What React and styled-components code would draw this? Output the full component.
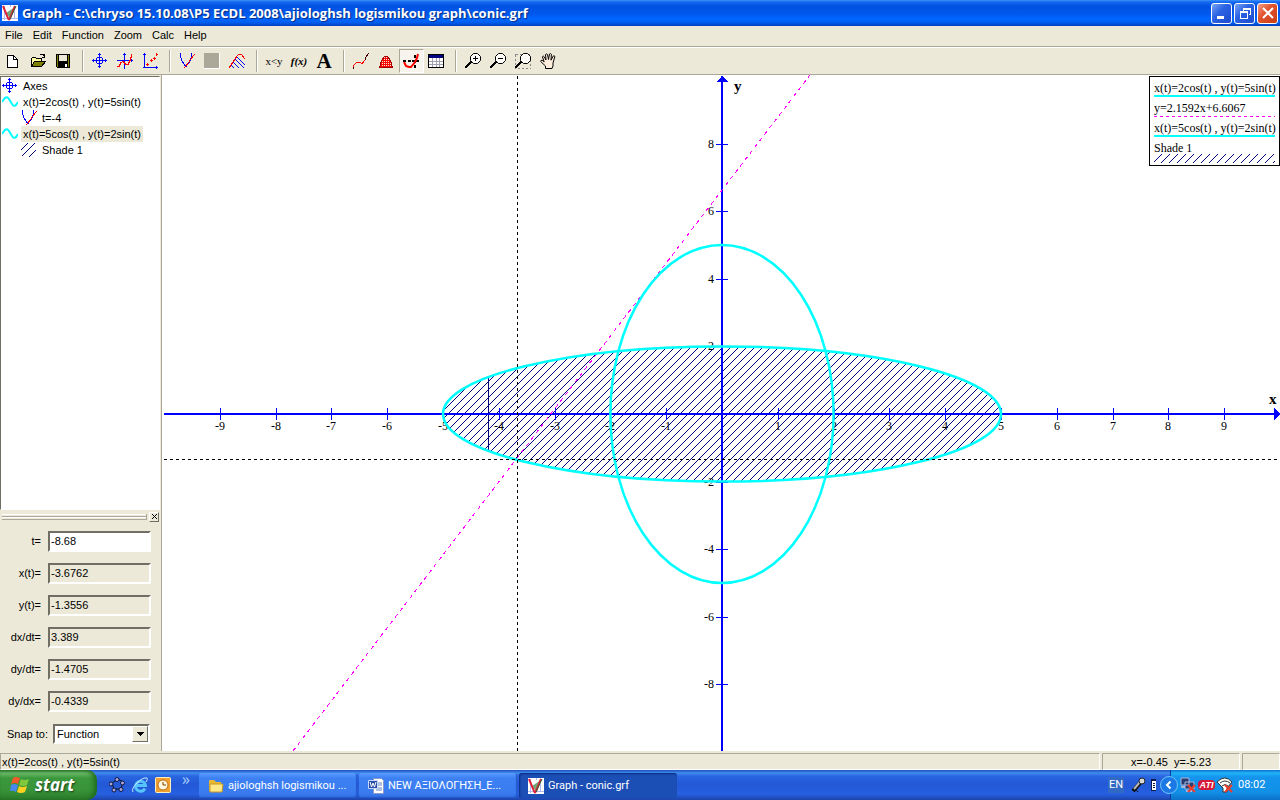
import React from "react";
import styled, { createGlobalStyle, css } from "styled-components";

const face = "#ece9d8";
const shadow = "#aca899";
const sans = '"Liberation Sans", Arial, sans-serif';
const humanist = '"Open Sans", "Noto Sans", sans-serif';
const serif = '"Liberation Serif", "Times New Roman", serif';

const GlobalStyle = createGlobalStyle`
  *, *::before, *::after { box-sizing: border-box; }
  body { margin: 0; background: ${face}; color: #000; font: 11px/16px ${sans}; }
  button, input, select { font: inherit; color: inherit; margin: 0; padding: 0; }
  svg { display: block; flex: none; }
`;

const Window = styled.div`
  display: flex;
  flex-direction: column;
  min-height: 100vh;
`;

/* ---------- title bar ---------- */
const TitleBar = styled.header`
  display: flex;
  align-items: center;
  gap: 4px;
  height: 26px;
  padding: 0 2px;
  background: linear-gradient(#3c92fa 0, #1468f0 2px, #0052e0 6px, #0058ee 14px, #0066ff 19px, #0062f4 22px, #0040c0 26px);
`;
const Title = styled.h1`
  flex: 1;
  margin: 0;
  font: bold 13px/20px ${humanist};
  color: #fff;
  text-shadow: 1px 1px 1px #0a2a80;
  white-space: nowrap;
  overflow: hidden;
`;
const CaptionButton = styled.button`
  display: flex;
  align-items: center;
  justify-content: center;
  width: 21px;
  height: 21px;
  margin-left: 2px;
  border: 1px solid #fff;
  border-radius: 3px;
  background: ${(p) =>
    p.$close
      ? "linear-gradient(135deg, #f0a088, #e2542e 40%, #c83c14)"
      : "linear-gradient(135deg, #7ca4f4, #2c64e4 40%, #1c4ccc)"};
`;
const CaptionButtons = styled.div`
  display: flex;
`;

/* ---------- menu and toolbar ---------- */
const MenuBar = styled.nav`
  display: flex;
  height: 21px;
  padding-top: 1px;
  border-bottom: 1px solid ${shadow};
`;
const MenuItem = styled.button`
  height: 16px;
  padding: 0 5px;
  border: 0;
  background: none;
`;
const ToolBar = styled.div`
  display: flex;
  align-items: center;
  height: 28px;
  padding-left: 1px;
  border-top: 1px solid #fff;
  border-bottom: 1px solid ${shadow};
`;
const ToolButton = styled.button`
  display: flex;
  align-items: center;
  justify-content: center;
  width: 25px;
  height: 24px;
  padding: 0 4px 0 3px;
  border: 1px solid transparent;
  background: none;
  ${(p) =>
    p.$pressed &&
    css`
      border-color: ${shadow} #fff #fff ${shadow};
      background: #f6f4ec;
    `}
`;
const ToolSeparator = styled.span`
  width: 2px;
  height: 22px;
  margin: 0 4px 0 6px;
  border-left: 1px solid ${shadow};
  border-right: 1px solid #fff;
`;

/* ---------- sidebar ---------- */
const Main = styled.main`
  display: flex;
  flex: 1;
  min-height: 0;
`;
const Sidebar = styled.aside`
  display: flex;
  flex-direction: column;
  flex: none;
  width: 163px;
  padding: 1px 2px 0 0;
  border-right: 1px solid #fff;
  box-shadow: inset -1px 0 ${shadow};
`;
const FunctionList = styled.ul`
  flex: 1;
  margin: 0;
  padding: 1px 0;
  list-style: none;
  background: #fff;
  border: 1px solid #fff;
  border-top-color: #716f64;
  border-left-color: #716f64;
`;
const FunctionItem = styled.li`
  display: flex;
  align-items: center;
  gap: 3px;
  height: 16px;
  padding-left: ${(p) => (p.$child ? 20 : 1)}px;
`;
const ItemLabel = styled.span`
  padding: 0 2px;
  background: ${(p) => (p.$selected ? face : "none")};
  white-space: nowrap;
`;
const PanelGrip = styled.div`
  display: flex;
  align-items: center;
  gap: 2px;
  height: 15px;
  padding: 0 1px 2px 2px;
`;
const GripLines = styled.div`
  flex: 1;
  height: 6px;
  border: solid ${shadow};
  border-width: 0 1px 1px 0;
  background: linear-gradient(#fff 0 1px, ${face} 1px 2px, ${shadow} 2px 3px, #fff 3px 4px, ${face} 4px);
`;
const CloseButton = styled.button`
  display: flex;
  align-items: center;
  justify-content: center;
  width: 10px;
  height: 10px;
  border: 1px solid;
  border-color: #fff #716f64 #716f64 #fff;
  background: ${face};
`;
const EvaluateForm = styled.form`
  display: flex;
  flex-direction: column;
`;
const FormRow = styled.div`
  display: flex;
  align-items: center;
  height: ${(p) => (p.$last ? 34 : 32)}px;
  gap: ${(p) => (p.$last ? 5 : 7)}px;
  padding-right: ${(p) => (p.$last ? 10 : 9)}px;
`;
const FieldLabel = styled.label`
  width: ${(p) => (p.$wide ? 48 : 41)}px;
  flex: none;
  text-align: right;
  white-space: nowrap;
`;
const sunken = css`
  border: 2px solid;
  border-color: #716f64 #fff #fff #716f64;
  border-radius: 0;
  outline: 0;
`;
const Field = styled.input`
  ${sunken}
  flex: 1;
  min-width: 0;
  height: 21px;
  padding: 0 1px;
  background: ${(p) => (p.readOnly ? face : "#fff")};
`;
const SelectBox = styled.div`
  position: relative;
  flex: 1;
`;
const Select = styled.select`
  ${sunken}
  display: block;
  width: 100%;
  height: 20px;
  padding: 0 2px;
  appearance: none;
  background: #fff;
`;
const SelectArrow = styled.span`
  position: absolute;
  top: 2px;
  right: 2px;
  display: flex;
  align-items: center;
  justify-content: center;
  width: 16px;
  height: 16px;
  border: 1px solid;
  border-color: #fff #716f64 #716f64 #fff;
  background: ${face};
  pointer-events: none;
`;

/* ---------- plot ---------- */
const PlotArea = styled.section`
  position: relative;
  flex: 1;
  min-width: 0;
  background: #fff;
`;
const PlotSvg = styled.svg`
  width: 100%;
  height: 100%;
`;
const Legend = styled.div`
  position: absolute;
  top: 1px;
  right: 0;
  width: 131px;
  height: 90px;
  padding: 5px 4px 0 4px;
  border: 1px solid #000;
  background: #fff;
  font: 12px/13px ${serif};
  white-space: nowrap;
`;
const LegendRow = styled.div`
  height: 20px;
`;
const LegendLine = styled.div`
  height: ${(p) => (p.$dashed ? 1 : 2)}px;
  margin-top: ${(p) => (p.$dashed ? 1 : 0)}px;
  background: ${(p) => (p.$dashed ? "repeating-linear-gradient(90deg, #f0f 0 3px, #fff 3px 6px)" : "#0ff")};
`;
const LegendHatch = styled.svg`
  width: 100%;
  height: 9px;
  margin-top: -1px;
`;

/* ---------- status bar ---------- */
const StatusBar = styled.footer`
  display: flex;
  gap: 2px;
  height: 19px;
  padding-top: 2px;
`;
const StatusCell = styled.div`
  flex: ${(p) => (p.$width ? "none" : 1)};
  width: ${(p) => (p.$width ? `${p.$width}px` : "auto")};
  padding: 0 1px;
  border: 1px solid;
  border-color: ${shadow} #fff #fff ${shadow};
  text-align: ${(p) => (p.$center ? "center" : "left")};
  white-space: pre;
`;

/* ---------- taskbar ---------- */
const TaskBar = styled.nav`
  display: flex;
  align-items: stretch;
  height: 30px;
  color: #fff;
  font: 11px/16px Roboto, "Noto Sans", sans-serif;
  background: linear-gradient(#1f50b8 0, #3f8cf0 3px, #2a66e0 6px, #2358d6 14px, #2660e0 24px, #1c44ac 30px);
`;
const StartButton = styled.button`
  display: flex;
  align-items: center;
  gap: 5px;
  width: 97px;
  padding-left: 10px;
  border: 0;
  border-radius: 0 10px 10px 0;
  color: #fff;
  font: italic bold 17px/24px ${humanist};
  text-shadow: 1px 1px 2px #1c401c;
  background: linear-gradient(#357c35 0, #6cbc6c 3px, #3c983c 8px, #389438 20px, #2c7c2c 30px);
  box-shadow: inset -3px 0 5px #1f6a1f;
`;
const QuickLaunch = styled.div`
  display: flex;
  align-items: center;
  gap: 7px;
  width: 102px;
  padding-left: 12px;
`;
const IconButton = styled.button`
  display: flex;
  border: 0;
  background: none;
`;
const Overflow = styled.button`
  align-self: flex-start;
  margin-left: 4px;
  border: 0;
  background: none;
  color: #a8d0ff;
  font: 16px/18px ${humanist};
`;
const TaskButtons = styled.div`
  display: flex;
  align-items: center;
  flex: 1;
  gap: 2px;
  min-width: 0;
  padding-top: 1px;
`;
const TaskButton = styled.button`
  display: flex;
  align-items: center;
  gap: 4px;
  flex: 0 1 158px;
  min-width: 0;
  height: 25px;
  padding: 1px 0 0 9px;
  border: 0;
  border-radius: 3px;
  color: #fff;
  white-space: nowrap;
  overflow: hidden;
  background: ${(p) => (p.$active ? "#1c4fb6" : "linear-gradient(#5c9cfc, #3c80f4 5px, #3a7cf0 20px, #2f6ce0)")};
  box-shadow: ${(p) => (p.$active ? "inset 1px 1px 2px #0c2c80" : "inset -1px -1px 1px #2458c8")};
`;
const Language = styled.button`
  align-self: center;
  width: 16px;
  height: 16px;
  border: 0;
  margin-right: 7px;
  background: #316ac5;
  color: #fff;
`;
const LanguageTools = styled.div`
  display: flex;
  align-items: center;
  gap: 4px;
  width: 39px;
`;
const Tray = styled.div`
  display: flex;
  align-items: center;
  gap: 2px;
  width: 110px;
  border-left: 1px solid #0c3c9c;
  background: linear-gradient(#1070c8 0, #20b4f8 3px, #1494ec 7px, #1290e8 22px, #0c70c8 30px);
`;
const TrayExpand = styled.button`
  display: flex;
  margin-left: -11px;
  border: 0;
  background: none;
`;
const Clock = styled.time`
  margin-left: 3px;
`;

/* ---------- icons ---------- */
const Icon = ({ size = 16, children, smooth }) => (
  <svg
    width={size}
    height={size}
    viewBox={`0 0 ${size} ${size}`}
    fill="none"
    shapeRendering={smooth ? "auto" : "crispEdges"}
    aria-hidden="true"
  >
    {children}
  </svg>
);

const GraphLogo = () => (
  <Icon smooth>
    <path d="M0 0h16v16H0z" fill="#fff" />
    <path d="M2.500 1v14M0 13.500h16M8.500 0v2M12.500 6v8" stroke="#b0b8f0" />
    <path d="M13 2L4 8l4 5z" fill="#70a878" />
    <path d="M1 1l5 12q1 3 2 0l5-12" stroke="#e02038" strokeWidth="2" />
    <path d="M8 14l6-13" stroke="#246838" />
  </Icon>
);
const NewIcon = () => (
  <Icon>
    <path d="M2.500 2.500h6l4 4v8h-10z" fill="#fff" stroke="#000" />
    <path d="M8.500 2.500v4h4" stroke="#000" />
  </Icon>
);
const OpenIcon = () => (
  <Icon>
    <path d="M1.500 13.500v-8l1-1h3l1 1h5v3" fill="#ffffa0" stroke="#000" />
    <path d="M1.500 13.500l3-5h11l-4 5z" fill="#808000" stroke="#000" />
    <path d="M9.500 2.500l1-1h3l1 2M14.500 1v4M12 4.500h3" stroke="#000" />
  </Icon>
);
const SaveIcon = () => (
  <Icon>
    <path d="M1.500 1.500h13v13h-12l-1-1z" fill="#808000" stroke="#000" />
    <path d="M4 2h8v6H4z" fill="#ece9d8" />
    <path d="M3 9h10v5H3z" fill="#000" />
    <path d="M10 11h2v3h-2z" fill="#fff" />
    <path d="M3.500 2v6.500h9V2" stroke="#000" />
  </Icon>
);
const AxesIcon = () => (
  <Icon>
    <path
      d="M7 0h1v15H7zM0 7h15v1H0zM6 1h3v1H6zM5 4h5v1H5zM5 10h5v1H5zM6 13h3v1H6zM1 6h1v3H1zM4 5h1v5H4zM10 5h1v5h-1zM13 6h1v3h-1z"
      fill="#00f"
    />
  </Icon>
);
const FunctionIcon = () => (
  <Icon>
    <path d="M7.500 0v16M0 7.500h16M6 1.500h3M14.500 6v3" stroke="#00f" />
    <path d="M0 13.500h2l2-4 2-1 3 3h2l2-4 2-6" stroke="#f00" />
  </Icon>
);
const PointsIcon = () => (
  <Icon>
    <path d="M2.500 0v14M1 14.500h15M1 1.500h3M14.500 13v3" stroke="#00f" />
    <path d="M4 11.500h3M5.500 10v3M8 7.500h3M9.500 6v3M11 5.500h3M12.500 4v3M14 1.500h2M14.500 0v3" stroke="#f00" />
  </Icon>
);
const TangentIcon = () => (
  <Icon>
    <path d="M1.500 0v4l2 5 3 4h1l3-4 2-5V0" stroke="#00f" />
    <path d="M15.500 1l-10 14" stroke="#f00" />
  </Icon>
);
const StopIcon = () => (
  <Icon>
    <path d="M0 0h16v16H0z" fill={shadow} />
    <path d="M15.500 0v15.500H0" stroke="#fff" />
  </Icon>
);
const ShadeIcon = () => (
  <Icon>
    <path d="M2 12l3 3M4 9l6 6M6 6l9 9M8 4l8 8" stroke="#00f" />
    <path d="M0 15L8 3l2-2h2l4 5" stroke="#f00" />
  </Icon>
);
const LineIcon = () => (
  <Icon>
    <path d="M0 15l1-3 3-3h3l2 2 3-4" stroke="#f00" />
    <path d="M12 7l1-3 3-4M0 16v-2" stroke="#400" />
  </Icon>
);
const AreaIcon = () => (
  <Icon>
    <defs>
      <pattern id="checker" width="2" height="2" patternUnits="userSpaceOnUse">
        <path d="M0 0h2v2H0z" fill="#f00" />
        <path d="M0 0h1v1H0z" fill="#ece9d8" />
      </pattern>
    </defs>
    <path d="M1.500 14.500l2-7 3-4h3l3 4 2 7z" fill="url(#checker)" stroke="#a00000" />
  </Icon>
);
const EvaluateIcon = () => (
  <Icon>
    <path d="M0 7h3v2H0zM5 7h3v2H5zM9 7h3v2H9zM13 7h3v2h-3zM11 2h2v3h-2zM11 7h2v3h-2zM11 12h2v3h-2z" fill="#000" />
    <path d="M1 9l2 4 3 1h2l4-5 2-4 1-4" stroke="#f00" strokeWidth="2" shapeRendering="auto" />
  </Icon>
);
const TableIcon = () => (
  <Icon>
    <path d="M.5 1.500h15v13H.5z" fill="#fff" stroke="#000" />
    <path d="M1 2h14v3H1z" fill="#000080" />
    <path d="M1 8.500h14M1 11.500h14M4.500 5v9M8.500 5v9M11.500 5v9" stroke="#a0a0b0" />
  </Icon>
);
const Magnifier = ({ sign, boxed }) => (
  <Icon>
    {boxed && <path d="M.5 1.500h15v14H.5z" stroke="#888" strokeDasharray="2 2" />}
    <path d="M8.500 .5h4l3 3v4l-3 3h-4l-3-3v-4z" fill="#fdfcf8" stroke="#000" shapeRendering="auto" />
    <path d="M6 9l-6 6" stroke="#000" strokeWidth="2" />
    {sign && <path d="M8 5.500h5" stroke="#000" />}
    {sign === "+" && <path d="M10.500 3v5" stroke="#000" />}
  </Icon>
);
const HandIcon = () => (
  <Icon smooth>
    <path
      d="M5.500 15.500V13L.7 8.500q0-1.500 1.500-1.200l2 1.500-1.800-5q.8-1.500 1.800 0L6 7 5.500 1.500q1-1.200 2 0L8.500 6.500 9.500 1q1.200-1 1.900.3L11 7.200l2.300-4.300q1.400-.5 1.500.8L13 10v3l-1 2.500z"
      fill="#ffeedd"
      stroke="#000"
    />
  </Icon>
);
const WaveIcon = () => (
  <Icon smooth>
    <path d="M0 8l3-4q2-2 4 1l3 5q2 3 4 1l2-3" stroke="#0ff" strokeWidth="2" />
  </Icon>
);
const HatchIcon = () => (
  <Icon>
    <path d="M0 8l7-7M1 14L14 1M8 15l7-7" stroke="#000080" />
  </Icon>
);

const XpFlag = () => (
  <svg width="20" height="20" viewBox="0 0 20 20" aria-hidden="true">
    <path d="M3 3q3-2 7 0L8 9Q5 7 1 9z" fill="#f05a28" />
    <path d="M11 4q3 2 8 0l-2 6q-4 2-8 0z" fill="#80c83c" />
    <path d="M1 10q3-2 7 0l-2 7q-3-2-6-1z" fill="#4888f0" />
    <path d="M9 11q3 2 8 0l-2 6q-4 2-8 0z" fill="#ffd020" />
  </svg>
);
const CircleDotsIcon = () => (
  <Icon smooth>
    <path d="M3 6l6-4 5 3-2 7H5z" stroke="#111" strokeWidth="1" />
    {[[8, 2.5], [13.5, 6], [12, 12.5], [5, 13], [2, 7]].map(([x, y]) => (
      <circle key={x} cx={x} cy={y} r="2" fill="#a8a8e0" stroke="#101840" />
    ))}
  </Icon>
);
const IeIcon = () => (
  <Icon smooth>
    <path d="M13 11.500a5 5 0 1 1 .5-3H5" stroke="#58c4fc" strokeWidth="3" />
    <path d="M1 15Q-1 12 5 6t10-5q1 1-1 4" stroke="#c8ecff" strokeWidth="1" />
  </Icon>
);
const OutlookIcon = () => (
  <Icon smooth>
    <rect x=".5" y=".5" width="15" height="15" rx="1" fill="#f0a030" stroke="#fff0c0" />
    <circle cx="8" cy="8" r="5" fill="#fff8e0" stroke="#c06c10" />
    <path d="M8 5v3h3" stroke="#804000" />
  </Icon>
);
const FolderIcon = () => (
  <Icon smooth>
    <path d="M1 3q0-1 1-1h4l2 2h5v9H1z" fill="#e8b830" />
    <path d="M2 6h13l-1 8H2z" fill="#ffe888" stroke="#c89820" />
  </Icon>
);
const WordIcon = () => (
  <Icon smooth>
    <path d="M5.500.5h8l2 2v13h-10z" fill="#fff" stroke="#8898c8" />
    <path d="M10 5h4M10 7h4M8 10h6M8 12h6" stroke="#6080c0" />
    <path d="M.5 2.500h9v8h-9z" fill="#2850a8" stroke="#c8d8ff" />
    <path d="M2 4l1.500 5L5 5l1.500 4L8 4" stroke="#fff" />
  </Icon>
);
const MicIcon = () => (
  <Icon smooth>
    <path d="M2 14l7-8" stroke="#111" strokeWidth="4" />
    <path d="M3 12l6-7" stroke="#b8b8b8" strokeWidth="2" />
    <circle cx="11" cy="4" r="3" fill="#d8d8d8" stroke="#222" />
    <path d="M3 14q3-2 4 1" stroke="#111" />
  </Icon>
);
const KeyboardIcon = () => (
  <svg width="5" height="12" viewBox="0 0 5 12" shapeRendering="crispEdges" aria-hidden="true">
    <path d="M0 0h5v11H0z" fill="#fff" />
    <path d="M0 0h5v2H0zM2 4h2v1H2zM2 6h2v1H2zM2 8h2v1H2zM0 11h5v1H0zM0 0h1v11H0z" fill="#101850" />
  </svg>
);
const ExpandIcon = () => (
  <Icon size={18} smooth>
    <circle cx="9" cy="9" r="8.500" fill="#1c78e4" stroke="#6cc4fc" />
    <path d="M10.500 5.500L7 9l3.500 3.500" stroke="#fff" strokeWidth="2" />
  </Icon>
);
const NetworkIcon = () => (
  <Icon smooth>
    <path d="M1 1h8v7H1zM5 5h9v7H5z" fill="#283c70" stroke="#a8b8e0" />
    <path d="M1 10h4M6 14h6" stroke="#a8b8e0" strokeWidth="2" />
    <path d="M8 8l7 7M15 8l-7 7" stroke="#f03c28" strokeWidth="2" />
  </Icon>
);
const AtiBadge = styled.span`
  width: 17px;
  border-radius: 4px;
  background: #d81838;
  font: italic bold 9px/10px ${sans};
  text-align: center;
`;
const WifiIcon = () => (
  <Icon smooth>
    <path d="M0 5q8-8 15 0l-5 6v4H6v-4z" fill="#fff" stroke="#333" />
    <path d="M3 6q5-4 10 0M5 9q3-3 6 0" stroke="#333" />
    <path d="M8 8l7 7M15 8l-7 7" stroke="#f03c28" strokeWidth="2" />
  </Icon>
);

const toolGroups = [
  [["New", <NewIcon />], ["Open", <OpenIcon />], ["Save", <SaveIcon />]],
  [["Edit axes", <AxesIcon />], ["Insert function", <FunctionIcon />], ["Insert point series", <PointsIcon />]],
  [["Insert tangent", <TangentIcon />], ["Stop", <StopIcon />], ["Insert shading", <ShadeIcon />]],
  [["Insert relation", "x<y"], ["Insert f(x)", "f(x)"], ["Insert text", "A"]],
  [["Length of path", <LineIcon />], ["Area", <AreaIcon />], ["Evaluate", <EvaluateIcon />], ["Table", <TableIcon />]],
  [["Zoom in", <Magnifier sign="+" />], ["Zoom out", <Magnifier sign="-" />], ["Zoom window", <Magnifier boxed />], ["Move", <HandIcon />]],
];
const toolFonts = {
  "x<y": `11px/16px ${serif}`,
  "f(x)": `italic bold 11px/16px ${serif}`,
  A: `bold 21px/20px ${serif}`,
};
const ToolText = styled.span`
  font: ${(p) => toolFonts[p.$kind]};
`;

const menus = ["File", "Edit", "Function", "Zoom", "Calc", "Help"];
const items = [
  { label: "Axes", icon: <AxesIcon /> },
  { label: "x(t)=2cos(t) , y(t)=5sin(t)", icon: <WaveIcon /> },
  { label: "t=-4", icon: <TangentIcon />, child: true },
  { label: "x(t)=5cos(t) , y(t)=2sin(t)", icon: <WaveIcon />, selected: true },
  { label: "Shade 1", icon: <HatchIcon />, child: true },
];
const fields = [
  ["t=", "-8.68"],
  ["x(t)=", "-3.6762"],
  ["y(t)=", "-1.3556"],
  ["dx/dt=", "3.389"],
  ["dy/dt=", "-1.4705"],
  ["dy/dx=", "-0.4339"],
];

/* ---------- chart ---------- */
const W = 1117;
const H = 676;
const unitX = 55.8;
const unitY = 33.8;
const px = (x) => Math.round(559 + x * unitX);
const py = (y) => Math.round(339 - y * unitY);
const hatchSteps = Array.from({ length: 8 }, (_, i) => `M${i} ${7 - i}h1v1h-1z`).join("");
const range = (from, to, step) => {
  const out = [];
  for (let v = from; v <= to; v += step) if (v !== 0) out.push(v);
  return out;
};
const tangent = (x) => 2.1592 * x + 6.6067;

const Plot = () => (
  <PlotSvg viewBox={`0 0 ${W} ${H}`} role="img" aria-label="Graph of two ellipses and a tangent">
    <defs>
      <pattern id="hatch" width="8" height="8" patternUnits="userSpaceOnUse">
        <path d={hatchSteps} fill="#000080" shapeRendering="crispEdges" />
      </pattern>
    </defs>
    <ellipse cx={px(0)} cy={py(0)} rx={5 * unitX} ry={2 * unitY} fill="url(#hatch)" />
    <path d={`M${px(-4.2)}.5 ${py(1.08)}V${py(-1.08)}`} stroke="#000080" />
    <g stroke="#00f" fill="#00f" shapeRendering="crispEdges">
      <path d={`M1 ${py(0)}H${W}M${px(0)} 1V${H}`} strokeWidth="2" />
      {range(-9, 9, 1).map((v) => (
        <path key={v} d={`M${px(v)}.5 ${py(0) - 6}v12`} />
      ))}
      {range(-8, 8, 2).map((v) => (
        <path key={v} d={`M${px(0) - 6} ${py(v)}.5h12`} />
      ))}
      <path d={`M${W} ${py(0)}l-6-6v12zM${px(0)} 1l-6 6h12z`} stroke="none" />
    </g>
    <g fontFamily={serif} fontSize="12">
      {range(-9, 9, 1).map((v) => (
        <text key={v} x={px(v)} y={py(0) + 16} textAnchor="middle">{v}</text>
      ))}
      {range(-8, 8, 2).map((v) => (
        <text key={v} x={px(0) - 8} y={py(v) + 4} textAnchor="end">{v}</text>
      ))}
    </g>
    <g fontFamily={serif} fontSize="15" fontWeight="bold">
      <text x={px(0) + 12} y="16">y</text>
      <text x={W - 11} y={py(0) - 10}>x</text>
    </g>
    <path
      d={`M${px(-7.68)} ${py(tangent(-7.68))}L${px(1.58)} ${py(tangent(1.58))}`}
      stroke="#f0f"
      strokeDasharray="4 4"
      shapeRendering="crispEdges"
    />
    <g fill="none" stroke="#0ff" strokeWidth="2.500">
      <ellipse cx={px(0)} cy={py(0)} rx={2 * unitX} ry={5 * unitY} />
      <ellipse cx={px(0)} cy={py(0)} rx={5 * unitX} ry={2 * unitY} />
    </g>
    <path
      d={`M354.5 1V${H}M1 384.5H${W}`}
      stroke="#000"
      strokeDasharray="3 3"
      shapeRendering="crispEdges"
    />
  </PlotSvg>
);

export default function App() {
  return (
    <Window>
      <GlobalStyle />
      <TitleBar>
        <GraphLogo />
        <Title>Graph - C:\chryso 15.10.08\P5 ECDL 2008\ajiologhsh logismikou graph\conic.grf</Title>
        <CaptionButtons>
          <CaptionButton aria-label="Minimize">
            <Icon><path d="M3 11h7v3H3z" fill="#fff" /></Icon>
          </CaptionButton>
          <CaptionButton aria-label="Restore">
            <Icon>
              <path d="M6 3h8v2H6zM13 5h1v5h-2v-1h1zM6 5h1v1H6zM3 6h8v2H3zM3 8h1v6H3zM10 8h1v6h-1zM4 13h6v1H4z" fill="#fff" />
            </Icon>
          </CaptionButton>
          <CaptionButton $close aria-label="Close">
            <Icon smooth><path d="M3 3l10 10M13 3L3 13" stroke="#fff" strokeWidth="2" /></Icon>
          </CaptionButton>
        </CaptionButtons>
      </TitleBar>
      <MenuBar>
        {menus.map((m) => <MenuItem key={m}>{m}</MenuItem>)}
      </MenuBar>
      <ToolBar role="toolbar">
        {toolGroups.map((group, i) => (
          <React.Fragment key={i}>
            {i > 0 && <ToolSeparator />}
            {group.map(([name, icon]) => (
              <ToolButton key={name} aria-label={name} $pressed={name === "Evaluate"}>
                {typeof icon === "string" ? <ToolText $kind={icon}>{icon}</ToolText> : icon}
              </ToolButton>
            ))}
          </React.Fragment>
        ))}
      </ToolBar>
      <Main>
        <Sidebar>
          <FunctionList>
            {items.map((item) => (
              <FunctionItem key={item.label} $child={item.child}>
                {item.icon}
                <ItemLabel $selected={item.selected}>{item.label}</ItemLabel>
              </FunctionItem>
            ))}
          </FunctionList>
          <PanelGrip>
            <GripLines />
            <CloseButton aria-label="Close panel">
              <Icon size={7}><path d="M1 1l5 5M6 1L1 6" stroke="#000" /></Icon>
            </CloseButton>
          </PanelGrip>
          <EvaluateForm>
            {fields.map(([label, value], i) => (
              <FormRow key={label}>
                <FieldLabel htmlFor={`value-${i}`}>{label}</FieldLabel>
                <Field id={`value-${i}`} defaultValue={value} readOnly={i > 0} />
              </FormRow>
            ))}
            <FormRow $last>
              <FieldLabel $wide htmlFor="snap">Snap to:</FieldLabel>
              <SelectBox>
                <Select id="snap"><option>Function</option></Select>
                <SelectArrow>
                  <svg width="7" height="4" viewBox="0 0 7 4" shapeRendering="crispEdges">
                    <path d="M0 0h7v1H0zM1 1h5v1H1zM2 2h3v1H2zM3 3h1v1H3z" />
                  </svg>
                </SelectArrow>
              </SelectBox>
            </FormRow>
          </EvaluateForm>
        </Sidebar>
        <PlotArea>
          <Plot />
          <Legend>
            <LegendRow>x(t)=2cos(t) , y(t)=5sin(t)<LegendLine /></LegendRow>
            <LegendRow>y=2.1592x+6.6067<LegendLine $dashed /></LegendRow>
            <LegendRow>x(t)=5cos(t) , y(t)=2sin(t)<LegendLine /></LegendRow>
            <LegendRow>
              Shade 1
              <LegendHatch aria-hidden="true"><rect width="100%" height="9" fill="url(#hatch)" /></LegendHatch>
            </LegendRow>
          </Legend>
        </PlotArea>
      </Main>
      <StatusBar>
        <StatusCell>x(t)=2cos(t) , y(t)=5sin(t)</StatusCell>
        <StatusCell $width={138} $center>{"x=-0.45  y=-5.23"}</StatusCell>
        <StatusCell $width={38} />
      </StatusBar>
      <TaskBar>
        <StartButton><XpFlag />start</StartButton>
        <QuickLaunch>
          <IconButton aria-label="Desktop circle"><CircleDotsIcon /></IconButton>
          <IconButton aria-label="Internet Explorer"><IeIcon /></IconButton>
          <IconButton aria-label="Outlook"><OutlookIcon /></IconButton>
          <Overflow>»</Overflow>
        </QuickLaunch>
        <TaskButtons>
          <TaskButton><FolderIcon />ajiologhsh logismikou ...</TaskButton>
          <TaskButton><WordIcon />NEW ΑΞΙΟΛΟΓΗΣΗ_Ε...</TaskButton>
          <TaskButton $active><GraphLogo />Graph - conic.grf</TaskButton>
        </TaskButtons>
        <Language>EN</Language>
        <LanguageTools><MicIcon /><KeyboardIcon /></LanguageTools>
        <Tray>
          <TrayExpand aria-label="Show hidden icons"><ExpandIcon /></TrayExpand>
          <NetworkIcon />
          <AtiBadge>ATI</AtiBadge>
          <WifiIcon />
          <Clock>08:02</Clock>
        </Tray>
      </TaskBar>
    </Window>
  );
}
